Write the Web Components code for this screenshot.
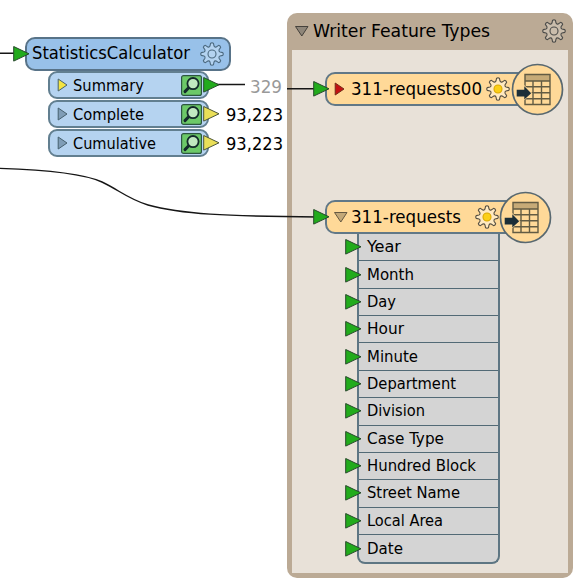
<!DOCTYPE html>
<html lang="en"><head><meta charset="utf-8"><title>Workspace</title>
<style>
html,body{margin:0;background:#fff}
body{width:582px;height:587px;overflow:hidden;position:relative;color:#000;font-family:"DejaVu Sans Condensed","DejaVu Sans",sans-serif}
</style></head><body>
<flow-canvas></flow-canvas>
<script>
const define=(name,html,setup)=>{
  const t=document.createElement('template');t.innerHTML=html;
  customElements.define(name,class extends HTMLElement{
    connectedCallback(){
      if(this.shadowRoot)return;
      this.attachShadow({mode:'open'}).append(t.content.cloneNode(true));
      if(setup)setup(this,this.shadowRoot);
    }
  });
};

// Text fitted to a given advance width.
define('fit-label',`<style>:host{display:block;flex:none;white-space:nowrap;overflow:visible}
span{display:inline-block;transform-origin:0 50%;white-space:nowrap}</style><span><slot></slot></span>`,(el,r)=>{
  const w=+el.getAttribute('w'),s=+el.getAttribute('size');
  el.style.cssText+=`;width:${w}px;font-size:${s}px;line-height:20px;height:20px`;
  const sp=r.querySelector('span');
  sp.style.transform=`scaleX(${w/sp.getBoundingClientRect().width})`;
});

define('port-arrow',`<style>:host{display:block;flex:none;width:17px;height:16px}svg{display:block}</style>
<svg width="17" height="16"><path d="M.7 .5L16 7.8L.7 15.1Z" stroke="#284a2c" stroke-width="1"/></svg>`,(el,r)=>{
  r.querySelector('path').setAttribute('fill',el.getAttribute('fill')||'#22ab1c');
  if(el.hasAttribute('fill'))r.querySelector('path').setAttribute('stroke','#4c5638');
});

define('fold-mark',`<style>:host{display:block;flex:none}svg{display:block}</style><svg width="14" height="14"><path stroke-width="1"/></svg>`,(el,r)=>{
  const p=r.querySelector('path');
  p.setAttribute('d',el.getAttribute('dir')==='down'?'M.5 2.5H13L6.8 12Z':'M1.2 1L10 7L1.2 13Z');
  p.setAttribute('fill',el.getAttribute('fill'));p.setAttribute('stroke',el.getAttribute('line')||'#46606e');
});

define('gear-icon',`<style>:host{display:block;flex:none;width:24px;height:24px}svg{display:block}</style>
<svg width="24" height="24" viewBox="-12 -12 24 24"><path stroke-width="1.1" stroke-linejoin="round"/><circle r="4"/></svg>`,(el,r)=>{
  let d='';
  for(let i=0;i<8;i++){
    const pts=[[8.2,-.25],[10.9,-.13],[11.3,0],[10.9,.13],[8.2,.25]];
    pts.forEach(([q,a],k)=>{
      const g=i*Math.PI/4+a,x=(q*Math.sin(g)).toFixed(2),y=(-q*Math.cos(g)).toFixed(2);
      if(k===0&&i>0){const m=(i-.5)*Math.PI/4;d+=`Q${(7*Math.sin(m)).toFixed(2)} ${(-7*Math.cos(m)).toFixed(2)} ${x} ${y}`;}
      else d+=(d?'L':'M')+x+' '+y;
    });
  }
  const p=r.querySelector('path'),c=r.querySelector('circle'),line=el.getAttribute('line');
  p.setAttribute('d',d+'Q-2.68 -6.47 -2.03 -7.95Z');p.setAttribute('fill',el.getAttribute('fill'));p.setAttribute('stroke',line);
  c.setAttribute('fill',el.getAttribute('core')||'none');c.setAttribute('stroke',el.getAttribute('core')?'#dba900':line);
  c.setAttribute('stroke-width','1.1');
});

define('inspect-button',`<style>:host{display:block;flex:none;width:21px;height:21px}svg{display:block}</style>
<svg width="21" height="21"><rect x=".6" y=".6" width="19.8" height="19.8" rx="2" fill="#6cc968" stroke="#2c5640" stroke-width="1.2"/>
<path d="M8.2 12.2L4 16.6" stroke="#132b2b" stroke-width="3" stroke-linecap="round"/>
<circle cx="12" cy="8.6" r="5.6" fill="#c0e9c0" stroke="#132b2b" stroke-width="1.8"/></svg>`);

define('table-badge',`<style>:host{display:block;flex:none;width:53px;height:53px}svg{display:block}</style>
<svg width="53" height="53" viewBox="-26.5 -26.5 53 53"><circle r="25" fill="#ffd998" stroke="#586870" stroke-width="1.7"/>
<path d="M-12.5-15H12.5V-8.5H-12.5Z" fill="#c6aa77"/>
<path d="M-12.5-15H12.5V15H-12.5ZM-12.5-8.5H12.5M-12.5-2.7H12.5M-12.5 3.2H12.5M-12.5 9.2H12.5M-4.5-8.5V15M4-8.5V15" fill="none" stroke="#625b43" stroke-width="1.4"/>
<path d="M-22-1.2H-14V-5L-5 3.8L-14 11.2V8.2H-22Z" fill="#ffd998"/>
<path d="M-20.8 .2H-13.2V-3.2L-6.3 3.8L-13.2 10V7H-20.8Z" fill="#1b2e38"/></svg>`);

define('node-card',`<style>:host{display:flex;align-items:center;box-sizing:border-box;height:34px;border:2px solid #617887;border-radius:10px}
::slotted(port-arrow){margin-left:-14px}</style><slot></slot>`);

define('transformer-outputs',`<style>:host{display:grid;gap:1px}div{display:flex;align-items:center;box-sizing:border-box;width:161px;height:28px;border:2px solid #627f90;border-radius:9px;background:#b5d3f0;padding-left:7px}
fit-label{margin:1px 0 0 2px}inspect-button{margin-left:auto}port-arrow{margin:0 -13px 0 1px}</style>
<div><fold-mark dir="right" fill="#f3e442"></fold-mark><fit-label w="71" size="16.3">Summary</fit-label><inspect-button></inspect-button><port-arrow></port-arrow></div>
<div><fold-mark dir="right" fill="#7f9db7"></fold-mark><fit-label w="71" size="16.3">Complete</fit-label><inspect-button></inspect-button><port-arrow fill="#eadf58"></port-arrow></div>
<div><fold-mark dir="right" fill="#7f9db7"></fold-mark><fit-label w="83" size="16.3">Cumulative</fit-label><inspect-button></inspect-button><port-arrow fill="#eadf58"></port-arrow></div>`);

define('attribute-list',`<style>:host{display:grid;grid-template-rows:repeat(12,27.36px);box-sizing:border-box;width:143px;border:2px solid #5e7683;border-top:0;border-radius:0 0 8px 8px;background:#d4d4d4}
div{display:flex;align-items:center;box-sizing:border-box;border-bottom:1.5px solid #526a76}div:last-child{border:0}
port-arrow{margin-left:-14px}fit-label{margin-left:5px}</style>`,(el,r)=>{
  for(const [t,w] of [['Year',34],['Month',47],['Day',29],['Hour',37],['Minute',51],['Department',89],['Division',58],['Case Type',77],['Hundred Block',109],['Street Name',93],['Local Area',76],['Date',36]]){
    const d=document.createElement('div');
    d.innerHTML=`<port-arrow></port-arrow><fit-label w="${w}" size="16.3">${t}</fit-label>`;
    r.append(d);
  }
});

define('writer-group',`<style>:host{display:flex;flex-direction:column;box-sizing:border-box;background:#bbaa95;border-radius:10px;padding:0 5px 5px}
header{height:36.5px;display:flex;align-items:center;padding-left:3px}fit-label{margin-left:3.5px}gear-icon{margin:0 2px 0 auto}
main{flex:1;background:#e8e1d8}</style>
<header><fold-mark dir="down" fill="#8f8679" line="#45413b"></fold-mark><fit-label w="177" size="18.3">Writer Feature Types</fit-label><gear-icon fill="#cabdac" line="#4b4b49"></gear-icon></header><main></main>`);

define('flow-canvas',`<style>:host{display:block;position:relative;width:582px;height:587px}
.at{position:absolute;left:var(--x);top:var(--y)}
writer-group{width:286px;height:565px}
.stat{width:206px;background:#98c1e9;border-color:#587388}
.stat fit-label{margin:-2px 0 0 2px}
.stat gear-icon{margin-left:auto;margin-right:5px}
.writer{background:#ffd998}
.writer fold-mark{margin-left:3.5px}.writer fit-label{margin:-1px 0 0 3px}
</style>
<writer-group class="at" style="--x:287px;--y:13px"></writer-group>
<svg class="at" style="--x:0;--y:0" width="340" height="230" fill="none" stroke="#161616" stroke-width="1.4"><path d="M0 53.2H16M216 84.5H245M287 88.8H318"/><path d="M0 168.4C35 169.5 82 173 102 182C119 190 128 199 148 205C180 214 225 216.3 318 217"/></svg>
<attribute-list class="at" style="--x:356.500px;--y:234px"></attribute-list>
<node-card class="at stat" style="--x:25px;--y:36.500px"><port-arrow></port-arrow><fit-label w="158" size="18.3">StatisticsCalculator</fit-label><gear-icon fill="#b4d3f0" line="#4c6a80"></gear-icon></node-card>
<transformer-outputs class="at" style="--x:47.500px;--y:71px"></transformer-outputs>
<fit-label class="at" style="--x:249.500px;--y:77px;color:#999" w="32" size="17">329</fit-label>
<fit-label class="at" style="--x:225.500px;--y:104.500px" w="57" size="17">93,223</fit-label>
<fit-label class="at" style="--x:225.500px;--y:133.500px" w="57" size="17">93,223</fit-label>
<node-card class="at writer" style="--x:325px;--y:72px;width:215px"><port-arrow></port-arrow><fold-mark dir="right" fill="#c41212" line="#762d18"></fold-mark><fit-label w="131" size="18.3">311-requests00</fit-label><gear-icon style="margin-left:4px" fill="#ffe9c0" line="#554f42" core="#fbcf17"></gear-icon></node-card>
<table-badge class="at" style="--x:510.500px;--y:63px"></table-badge>
<node-card class="at writer" style="--x:325px;--y:200px;width:204px"><port-arrow></port-arrow><fold-mark dir="down" fill="#c3a878" line="#665942"></fold-mark><fit-label w="110" size="18.3">311-requests</fit-label><gear-icon style="margin-left:14px" fill="#ffe9c0" line="#554f42" core="#fbcf17"></gear-icon></node-card>
<table-badge class="at" style="--x:499px;--y:190.500px"></table-badge>`);
</script></body></html>
